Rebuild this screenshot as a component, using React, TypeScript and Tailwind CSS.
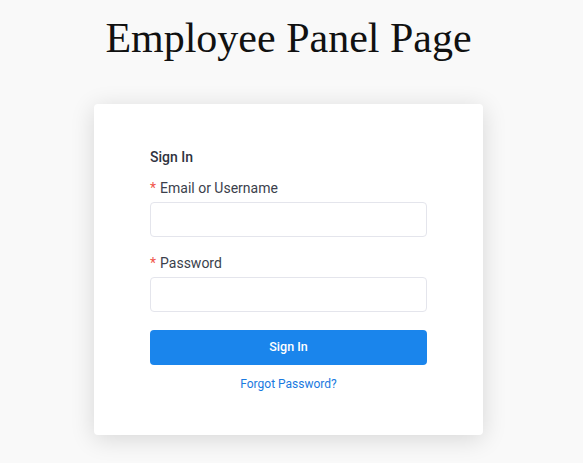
const App = () => {
  return (
    <div className="min-h-screen bg-[#f9f9f9] flex flex-col items-center pr-[6px]" style={{ fontFamily: "Roboto, 'Liberation Sans', sans-serif" }}>
      <h1 className="mt-[10px] text-[42px] leading-[56px] text-[#111]" style={{ fontFamily: "'Liberation Serif', serif" }}>
        Employee Panel Page
      </h1>

      <div className="mt-[38px] w-[389px] bg-white rounded-[4px] shadow-[0_4px_24px_rgba(0,0,0,0.14)] px-[56px] pt-[43px] pb-[40px]">
        <p className="text-[14px] leading-[20px] font-medium text-[#2f3340]">Sign In</p>

        <div className="mt-[11px]">
          <label className="block text-[14px] leading-[20px] text-[#3b3f4c]">
            <span className="text-[#f0564b] mr-[4px]">*</span>Email or Username
          </label>
          <input type="text" className="mt-[4px] block w-full h-[35px] rounded-[4px] border border-[#e4e5ec] bg-white outline-none" />
        </div>

        <div className="mt-[16px]">
          <label className="block text-[14px] leading-[20px] text-[#3b3f4c]">
            <span className="text-[#f0564b] mr-[4px]">*</span>Password
          </label>
          <input type="password" className="mt-[4px] block w-full h-[35px] rounded-[4px] border border-[#e4e5ec] bg-white outline-none" />
        </div>

        <button className="mt-[18px] w-full h-[35px] rounded-[4px] bg-[#1a85ec] text-white text-[12.5px] font-medium">
          Sign In
        </button>

        <div className="mt-[6px] text-center">
          <a href="#" className="text-[12px] leading-[20px] text-[#1a7ae0]">Forgot Password?</a>
        </div>
      </div>
    </div>
  );
};

export default App;
